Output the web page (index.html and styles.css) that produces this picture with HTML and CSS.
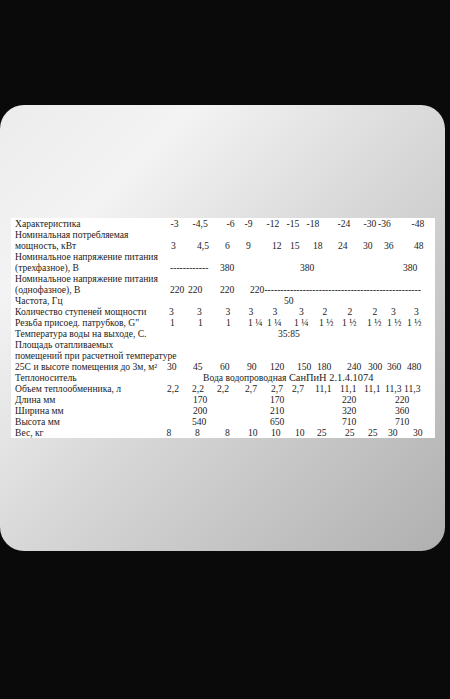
FILE: index.html
```html
<!DOCTYPE html>
<html lang="ru">
<head>
<meta charset="utf-8">
<title>Характеристики</title>
<link rel="stylesheet" href="styles.css">
</head>
<body>
<div class="card">
  <div class="sheet">
    <div class="row r-head"><span class="lbl">Характеристика</span><div class="vals"><span>-3</span><span>-4,5</span><span>-6</span><span>-9</span><span>-12</span><span>-15</span><span>-18</span><span>-24</span><span>-30</span><span>-36</span><span>-48</span></div></div>
    <div class="row">Номинальная потребляемая</div>
    <div class="row r-pow"><span class="lbl">мощность, кВт</span><div class="vals"><span>3</span><span>4,5</span><span>6</span><span>9</span><span>12</span><span>15</span><span>18</span><span>24</span><span>30</span><span>36</span><span>48</span></div></div>
    <div class="row">Номинальное напряжение питания</div>
    <div class="row r-3ph"><span class="lbl">(трехфазное), В</span><div class="vals"><span>------------</span><span>380</span><span>380</span><span>380</span></div></div>
    <div class="row">Номинальное напряжение питания</div>
    <div class="row r-1ph"><span class="lbl">(однофазное), В</span><div class="vals"><span>220</span><span>220</span><span>220</span><span>220-------------------------------------------------</span></div></div>
    <div class="row r-freq"><span class="lbl">Частота, Гц</span><div class="vals"><span>50</span></div></div>
    <div class="row r-steps"><span class="lbl">Количество ступеней мощности</span><div class="vals"><span>3</span><span>3</span><span>3</span><span>3</span><span>3</span><span>3</span><span>2</span><span>2</span><span>2</span><span>3</span><span>3</span></div></div>
    <div class="row r-thread"><span class="lbl">Резьба присоед. патрубков, G"</span><div class="vals"><span>1</span><span>1</span><span>1</span><span>1 ¼</span><span>1 ¼</span><span>1 ¼</span><span>1 ½</span><span>1 ½</span><span>1 ½</span><span>1 ½</span><span>1 ½</span></div></div>
    <div class="row r-temp"><span class="lbl">Температура воды на выходе, С.</span><div class="vals"><span>35:85</span></div></div>
    <div class="row">Площадь отапливаемых</div>
    <div class="row">помещений при расчетной температуре</div>
    <div class="row r-area"><span class="lbl">25С и высоте помещения до 3м, м²</span><div class="vals"><span>30</span><span>45</span><span>60</span><span>90</span><span>120</span><span>150</span><span>180</span><span>240</span><span>300</span><span>360</span><span>480</span></div></div>
    <div class="row r-carrier"><span class="lbl">Теплоноситель</span><div class="vals"><span>Вода водопроводная <span class="big">СанПиН 2.1.4.1074</span></span></div></div>
    <div class="row r-vol"><span class="lbl">Объем теплообменника, л</span><div class="vals"><span>2,2</span><span>2,2</span><span>2,2</span><span>2,7</span><span>2,7</span><span>2,7</span><span>11,1</span><span>11,1</span><span>11,1</span><span>11,3</span><span>11,3</span></div></div>
    <div class="row r-dim"><span class="lbl">Длина мм</span><div class="vals"><span>170</span><span>170</span><span>220</span><span>220</span></div></div>
    <div class="row r-dim"><span class="lbl">Ширина мм</span><div class="vals"><span>200</span><span>210</span><span>320</span><span>360</span></div></div>
    <div class="row r-dim r-h"><span class="lbl">Высота мм</span><div class="vals"><span>540</span><span>650</span><span>710</span><span>710</span></div></div>
    <div class="row r-wt"><span class="lbl">Вес, кг</span><div class="vals"><span>8</span><span>8</span><span>8</span><span>10</span><span>10</span><span>10</span><span>25</span><span>25</span><span>25</span><span>30</span><span>30</span></div></div>
  </div>
</div>
</body>
</html>
```
FILE: styles.css
```css
html, body {
  margin: 0;
  padding: 0;
}
body {
  background: #0a0a0a;
  width: 450px;
  height: 699px;
  overflow: hidden;
}
.card {
  margin-top: 105px;
  width: 445px;
  height: 446px;
  border-radius: 24px;
  background: linear-gradient(135deg, #ececec 0%, #f3f3f3 22%, #d9d9d9 50%, #b0b0b0 100%);
  overflow: hidden;
  padding-top: 113px;
  box-sizing: border-box;
}
.sheet {
  margin-left: 11px;
  width: 424px;
  background: #ffffff;
  padding-left: 4px;
  box-sizing: border-box;
  font-family: "Liberation Serif", "Times New Roman", serif;
  font-size: 9.6px;
  line-height: 11px;
  color: #1c1c1c;
}
.row {
  height: 11px;
  white-space: nowrap;
  display: flex;
}
.lbl {
  width: 150px;
  flex: none;
  white-space: nowrap;
}
.vals {
  display: grid;
  grid-auto-flow: column;
  white-space: nowrap;
}
.big {
  font-size: 10.4px;
}
.r-head .vals { padding-left: 5.5px; grid-template-columns: 22px 34px 18px 22px 20px 20px 31px 26px 14.5px 33.5px auto; }
.r-pow .vals { padding-left: 6px; grid-template-columns: 26px 28px 21px 26px 18px 23px 25px 25px 21px 30px auto; }
.r-3ph .vals { padding-left: 5px; grid-template-columns: 50px 80px 103px auto; }
.r-1ph .vals { padding-left: 5px; grid-template-columns: 18px 32px 30px 173px; }
.r-freq .vals { padding-left: 119px; }
.r-steps .vals { padding-left: 4px; grid-template-columns: 28px 28.5px 23px 24px 26.5px 23.5px 25px 25px 18.5px 23px auto; }
.r-thread .vals { padding-left: 5px; grid-template-columns: 28px 28px 22px 19px 27px 25px 23px 25px 20px 20px auto; }
.r-temp .vals { padding-left: 113px; }
.r-area .vals { padding-left: 2px; grid-template-columns: 26px 27px 27px 23px 27px 20px 30px 21px 19px 20px auto; }
.r-carrier .vals { padding-left: 38px; }
.r-vol .vals { padding-left: 2px; grid-template-columns: 25px 25px 28px 26px 21px 23px 25px 24px 21px 19px auto; }
.r-dim .vals { padding-left: 28px; grid-template-columns: 77px 72px 53px auto; }
.r-h .vals { padding-left: 27px; grid-template-columns: 78px 72px 53px auto; }
.r-wt .vals { padding-left: 1.5px; grid-template-columns: 28.5px 30px 23px 23px 24px 22px 28px 23px 20px 25px auto; }
```
